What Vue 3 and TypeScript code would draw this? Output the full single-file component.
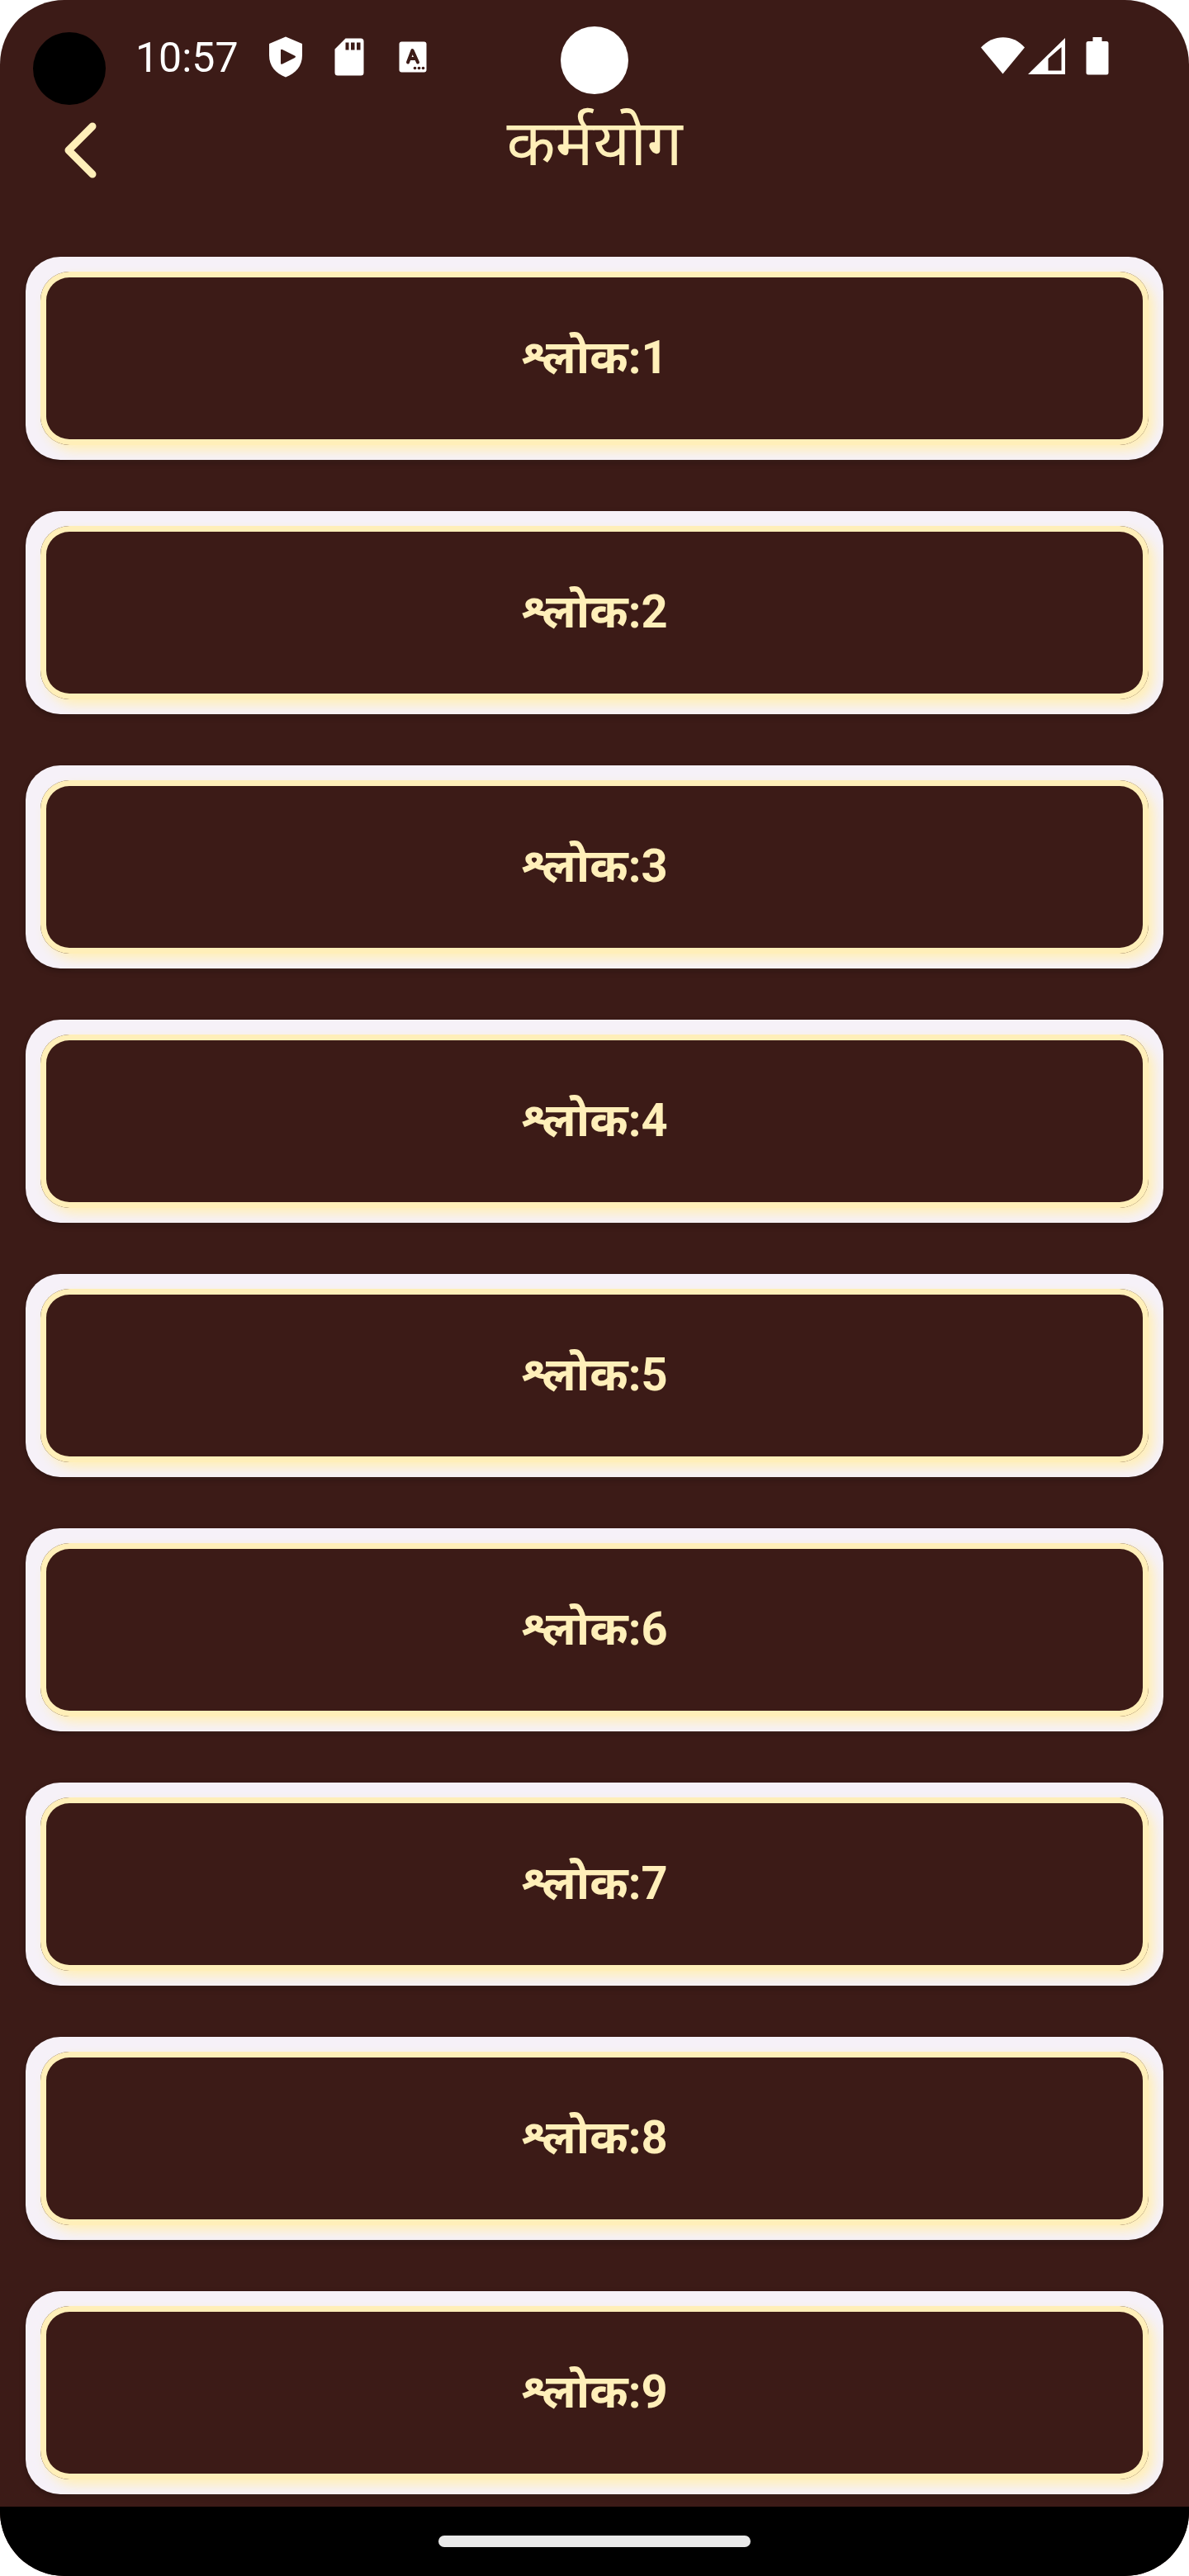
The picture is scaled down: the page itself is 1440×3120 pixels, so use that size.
<script setup lang="ts">
interface Shloka {
  id: number
  label: string
}

const chapterTitle = 'कर्मयोग'
const shlokas: Shloka[] = Array.from({ length: 9 }, (_, index) => ({
  id: index + 1,
  label: `श्लोक:${index + 1}`,
}))
</script>

<template>
  <div class="screen">
    <div class="status-bar">
      <span class="profile-dot"></span>
      <span class="camera"></span>
      <div class="status-left">
        <span class="clock">10:57</span>
        <svg class="shield" width="42" height="50" viewBox="0 0 42 50" aria-hidden="true">
          <path
            fill="currentColor"
            fill-rule="evenodd"
            d="M21 0.500 41 9V23C41 36 33 45 21 49.500 9 45 1 36 1 23V9ZM15 17V32.500Q15 34.500 17 33.500L32 26Q34 24.500 32 23.500L17 16Q15 15 15 17Z"
          />
        </svg>
        <svg class="sd-card" width="36" height="46" viewBox="0 0 36 46" aria-hidden="true">
          <path
            fill="currentColor"
            fill-rule="evenodd"
            d="M13.500 .5H32Q35.500 .5 35.500 4V42Q35.500 45.500 32 45.500H4Q.5 45.500 .5 42V13.500ZM13.500 5.500V14.500H17.500V5.500ZM20 5.500V14.500H24.500V5.500ZM27 5.500V14.500H31.500V5.500Z"
          />
        </svg>
        <svg class="language" width="34" height="38" viewBox="0 0 34 38" aria-hidden="true">
          <rect x=".5" y=".5" width="33" height="37" rx="3" fill="currentColor" />
          <path
            d="M11 25.500 16.500 11 23 25.500M13 21H21"
            fill="none"
            stroke="#3c1b17"
            stroke-width="4"
            stroke-linecap="round"
            stroke-linejoin="round"
          />
          <g fill="#3c1b17">
            <circle cx="19.500" cy="32.500" r="1.800" />
            <circle cx="24.500" cy="32.500" r="1.800" />
            <circle cx="29.500" cy="32.500" r="1.800" />
          </g>
        </svg>
      </div>
      <div class="status-right">
        <svg width="54" height="46" viewBox="0 0 54 46" aria-hidden="true">
          <path fill="currentColor" d="M0 12.500C15-4 39-4 53 12.500L26.500 44.500Z" />
        </svg>
        <svg width="46" height="46" viewBox="0 0 46 46" aria-hidden="true">
          <path
            fill="currentColor"
            fill-rule="evenodd"
            d="M0 45 45 1V45ZM24.500 26V40.500H40.500V12Z"
          />
        </svg>
        <svg class="battery" width="28" height="46" viewBox="0 0 28 46" aria-hidden="true">
          <path
            fill="currentColor"
            d="M8.500 0H19.500V5H25Q27.500 5 27.500 7.500V43Q27.500 45.500 25 45.500H3Q.5 45.500 .5 43V7.500Q.5 5 3 5H8.500Z"
          />
        </svg>
      </div>
    </div>

    <header class="app-bar">
      <button class="back" type="button" aria-label="Back">
        <svg width="40" height="68" viewBox="0 0 40 68" aria-hidden="true">
          <path
            d="M34 5 5 34 34 63"
            fill="none"
            stroke="currentColor"
            stroke-width="9"
            stroke-linecap="round"
            stroke-linejoin="round"
          />
        </svg>
      </button>
      <h1 class="title">{{ chapterTitle }}</h1>
    </header>

    <main class="list">
      <div v-for="shloka in shlokas" :key="shloka.id" class="card">
        <button class="shloka" type="button">{{ shloka.label }}</button>
      </div>
    </main>

    <footer class="nav-bar"><span class="handle"></span></footer>
  </div>
</template>

<style>
body {
  margin: 0;
  background: #ffffff;
}
</style>

<style scoped>
.screen {
  display: flex;
  flex-direction: column;
  min-height: 100vh;
  overflow: hidden;
  border-radius: 78px;
  background: #3c1b17;
  color: #ffefb9;
  font-family: Roboto, 'Noto Sans', sans-serif;
}

.status-bar {
  position: relative;
  display: flex;
  justify-content: space-between;
  box-sizing: border-box;
  height: 124px;
  padding: 44px 97px 0 164px;
  color: #ffffff;
}

.profile-dot {
  position: absolute;
  top: 39px;
  left: 40px;
  width: 88px;
  height: 88px;
  border-radius: 50%;
  background: #000000;
}

.camera {
  position: absolute;
  top: 32px;
  left: calc(50% - 41px);
  width: 82px;
  height: 82px;
  border-radius: 50%;
  background: #ffffff;
}

.status-left,
.status-right {
  display: flex;
  align-items: center;
  height: 50px;
}

.status-right {
  gap: 3px;
  height: 48px;
}

.clock {
  width: 125px;
  padding-top: 2px;
  font-size: 50px;
  line-height: 50px;
}

.shield {
  margin-left: 36px;
}

.sd-card {
  margin-left: 38px;
}

.language {
  margin-left: 42px;
}

.battery {
  margin-left: 21px;
}

.app-bar {
  display: grid;
  grid-template-columns: 196px 1fr 196px;
  height: 187px;
}

.back {
  display: flex;
  align-items: center;
  height: 116px;
  padding: 0 0 0 78px;
  border: 0;
  background: none;
  color: inherit;
}

.title {
  margin: 0;
  font-size: 77px;
  font-weight: 400;
  line-height: 100px;
  text-align: center;
}

.list {
  display: flex;
  flex: 1;
  flex-direction: column;
  gap: 62px;
  padding: 0 31px 15px;
}

.card {
  display: flex;
  box-sizing: border-box;
  height: 246px;
  padding: 18px;
  border-radius: 42px;
  background: #f6f1f8;
  box-shadow: 0 3px 7px rgba(0, 0, 0, 0.25);
}

.shloka {
  flex: 1;
  padding: 0 0 2px;
  border: 0;
  border-radius: 35px;
  background: #3c1b17;
  box-shadow:
    inset 0 0 0 7px #ffefb9,
    7px 7px 14px #ffefb9;
  color: inherit;
  font: 700 56px/72px Roboto, 'Noto Sans', sans-serif;
}

.nav-bar {
  display: flex;
  align-items: center;
  justify-content: center;
  height: 84px;
  background: #000000;
}

.handle {
  width: 378px;
  height: 14px;
  border-radius: 7px;
  background: #e9e9e9;
}
</style>
